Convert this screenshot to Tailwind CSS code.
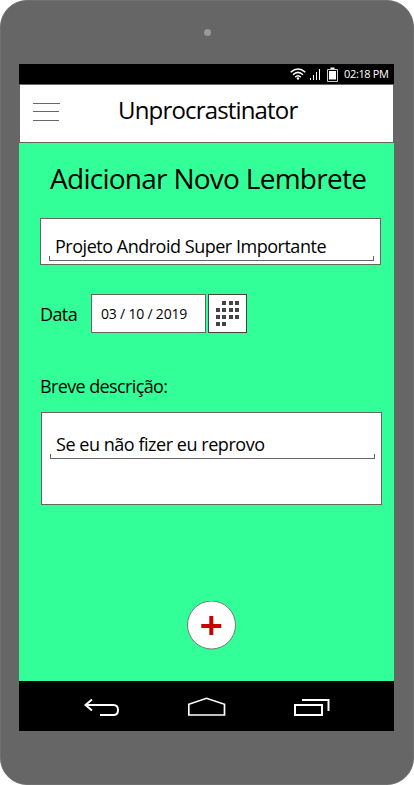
<!DOCTYPE html>
<html lang="pt-BR">
<head>
<meta charset="utf-8">
<title>Unprocrastinator</title>
<script src="https://cdn.jsdelivr.net/npm/@tailwindcss/browser@4"></script>
</head>
<body class="bg-white font-['Open_Sans','Noto_Sans',sans-serif] text-black">
<div class="flex h-[785px] w-[414px] flex-col overflow-hidden rounded-[27px] border border-[#707070] bg-[#666] whitespace-nowrap">
  <div class="flex h-[63px] shrink-0 justify-center pt-[27.5px]">
    <div class="size-[7px] rounded-full bg-[#999]"></div>
  </div>
  <div class="ml-[18px] flex h-[667px] w-[375px] shrink-0 flex-col">
    <div class="flex h-5 shrink-0 items-start bg-black text-white">
      <svg class="ml-[271px] h-5 w-[50px] shrink-0" viewBox="290 64 50 20" fill="none" stroke="#fff">
        <path d="M290.7 72.2Q298 65.800 305.300 72.200" stroke-width="1.500"/>
        <path d="M293 74.800Q298 70 303 74.800" stroke-width="1.500"/>
        <path d="M295.300 77.100Q298 74.500 300.700 77.100" stroke-width="1.500"/>
        <circle cx="298" cy="78.500" r="1.200" fill="#fff" stroke="none"/>
        <path d="M310.500 80v-2M313.500 80v-5M316.500 80v-8M319.500 80V69" stroke-width="1"/>
        <path d="M327.500 69.500h10v12h-10z" stroke="#ccc" stroke-width="1"/>
        <path d="M329 71h7v8.500h-7zM330.500 67.500h4v1.500h-4z" fill="#fff" stroke="none"/>
      </svg>
      <span class="ml-1 text-[11px] leading-[20px] tracking-[-0.35px]">02:18 PM</span>
    </div>
    <div class="flex h-[59px] shrink-0 items-start border border-[#666] bg-white">
      <svg class="ml-[13px] h-[57px] w-7 shrink-0" viewBox="33 85 28 57" fill="#666" shape-rendering="crispEdges">
        <path d="M33 103h27v1H33zM33 111h26v1H33zM33 120h26v1H33z"/>
      </svg>
      <h1 class="ml-[57px] text-[24px] leading-[49px] tracking-[-0.83px]">Unprocrastinator</h1>
    </div>
    <main class="flex h-[538px] shrink-0 flex-col items-start bg-[#33ff99]">
      <h2 class="mt-4 ml-[31px] text-[28px] leading-[38px] tracking-[-0.73px]">Adicionar Novo Lembrete</h2>
      <div class="mt-[21px] ml-[21px] flex h-[47px] w-[341px] flex-col border border-[#666] bg-white pt-[14px] pl-2">
        <div class="h-[23px] pl-[6px] text-[18px] leading-[27px] tracking-[-0.48px]">Projeto Android Super Importante</div>
        <div class="h-[5px] w-[325px] border-x border-b border-[#666]"></div>
      </div>
      <div class="mt-[29px] ml-[21px] flex h-[39px]">
        <span class="w-[51px] text-[18px] leading-[40px] tracking-[-0.6px]">Data</span>
        <div class="h-[39px] w-[115px] border border-[#666] bg-white pl-[9px] text-[14px] leading-[37px] tracking-[-0.2px]">03 / 10 / 2019</div>
        <div class="ml-0.5 h-[39px] w-[39px] border border-[#444] bg-white">
          <svg class="size-[37px]" viewBox="209 295 37 37" fill="#444">
            <path d="M222 301h4v4h-4zM229 301h4v4h-4zM235 301h4v4h-4zM216 308h4v4h-4zM222 308h4v4h-4zM229 308h4v4h-4zM235 308h4v4h-4zM216 315h4v4h-4zM222 315h4v4h-4zM229 315h4v4h-4zM235 315h4v4h-4zM216 322h4v4h-4zM222 322h4v4h-4z"/>
          </svg>
        </div>
      </div>
      <span class="mt-[39px] ml-[21px] text-[18px] leading-[28px] tracking-[-0.62px]">Breve descrição:</span>
      <div class="mt-3 ml-[22px] flex h-[93px] w-[341px] flex-col border border-[#666] bg-white pt-[17px] pl-2">
        <div class="h-[24px] pl-[6px] text-[18px] leading-[28px] tracking-[-0.46px]">Se eu não fizer eu reprovo</div>
        <div class="h-[5px] w-[325px] border-x border-b border-[#666]"></div>
      </div>
      <button class="mt-[96px] ml-[168px] size-[49px]">
        <svg class="size-[49px]" viewBox="187 601 49 49">
          <circle cx="211.500" cy="625" r="24" fill="#fff" stroke="#777" stroke-width="1"/>
          <path d="M209.300 616h4v8h8v4h-8v7h-4v-7h-8v-4h8z" fill="#c00"/>
        </svg>
      </button>
    </main>
    <nav class="flex h-[50px] shrink-0 bg-black">
      <svg class="h-[50px] w-[375px]" viewBox="19 681 375 50" fill="none" stroke="#fff" stroke-width="2">
        <path d="M92 699.500L85.500 705L92 710.500M85.500 705H113.500Q118 705 118 710T113.500 715H100"/>
        <path d="M188.800 715V704.300L206.500 698.300L224.500 704.300V715Z" stroke-width="1.700"/>
        <path d="M295 705h27v10h-27zM302 700h26.500v11"/>
      </svg>
    </nav>
  </div>
</div>
</body>
</html>
